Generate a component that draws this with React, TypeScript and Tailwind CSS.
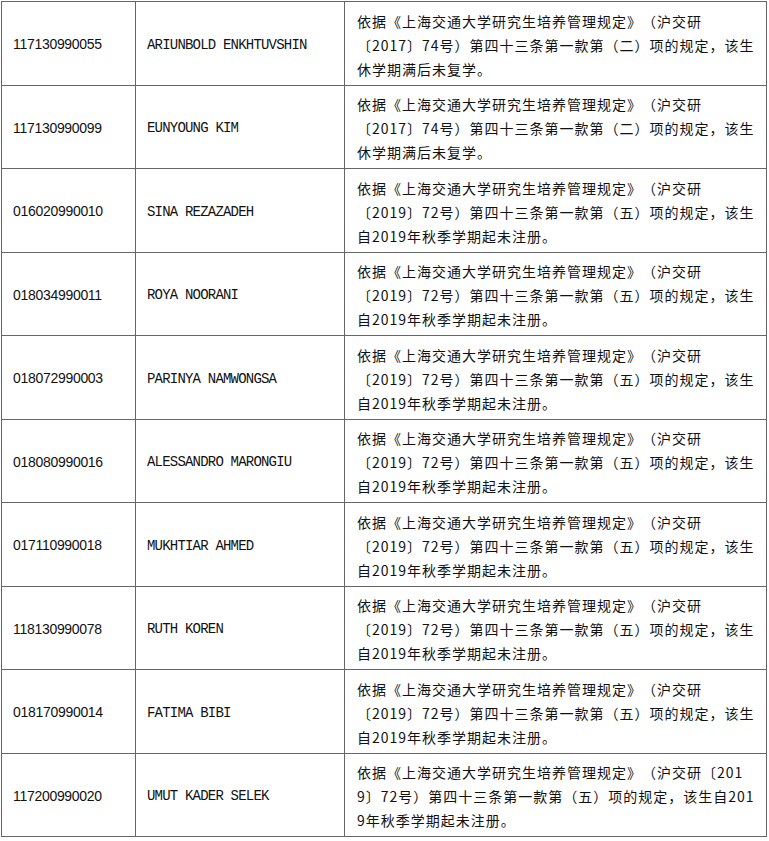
const RULE = "依据《上海交通大学研究生培养管理规定》（沪交研";

type Row = { id: string; name: string; lines: string[] };

const suspend = [RULE, "〔2017〕74号）第四十三条第一款第（二）项的规定，该生", "休学期满后未复学。"];
const unregistered = [RULE, "〔2019〕72号）第四十三条第一款第（五）项的规定，该生", "自2019年秋季学期起未注册。"];

const rows: Row[] = [
  { id: "117130990055", name: "ARIUNBOLD ENKHTUVSHIN", lines: suspend },
  { id: "117130990099", name: "EUNYOUNG KIM", lines: suspend },
  { id: "016020990010", name: "SINA REZAZADEH", lines: unregistered },
  { id: "018034990011", name: "ROYA NOORANI", lines: unregistered },
  { id: "018072990003", name: "PARINYA NAMWONGSA", lines: unregistered },
  { id: "018080990016", name: "ALESSANDRO MARONGIU", lines: unregistered },
  { id: "017110990018", name: "MUKHTIAR AHMED", lines: unregistered },
  { id: "118130990078", name: "RUTH KOREN", lines: unregistered },
  { id: "018170990014", name: "FATIMA BIBI", lines: unregistered },
  {
    id: "117200990020",
    name: "UMUT KADER SELEK",
    lines: [
      "依据《上海交通大学研究生培养管理规定》（沪交研〔201",
      "9〕72号）第四十三条第一款第（五）项的规定，该生自201",
      "9年秋季学期起未注册。",
    ],
  },
];

export default function App() {
  return (
    <div className="w-[769px] h-[841px] bg-white pl-px pt-px text-[#111]">
      <div className="w-[766px] grid grid-cols-[134px_209px_1fr] border-r border-b border-[#666]">
        {rows.map((r, i) => {
          const h = i % 2 === 0 ? "h-[84px]" : "h-[83px]";
          return (
            <div key={r.id} className="contents">
              <div
                className={`${h} border-l border-t border-[#666] pl-[11px] pt-[2px] flex items-center text-[14px] tracking-[-0.3px]`}
                style={{ fontFamily: '"Liberation Sans", Arial, sans-serif' }}
              >
                {r.id}
              </div>
              <div
                className={`${h} border-l border-t border-[#666] pl-[11px] pt-[3px] flex items-center text-[14px] tracking-[-0.8px]`}
                style={{ fontFamily: '"Liberation Mono", monospace' }}
              >
                {r.name}
              </div>
              <div
                className={`${h} border-l border-t border-[#666] pl-[12px] pt-[2px] flex flex-col justify-center text-[14px] leading-[24px] tracking-[1px] whitespace-nowrap [text-spacing-trim:space-all]`}
                style={{ fontFamily: '"Noto Sans CJK SC", sans-serif' }}
              >
                {r.lines.map((l, j) => (
                  <div key={j}>{l}</div>
                ))}
              </div>
            </div>
          );
        })}
      </div>
    </div>
  );
}
